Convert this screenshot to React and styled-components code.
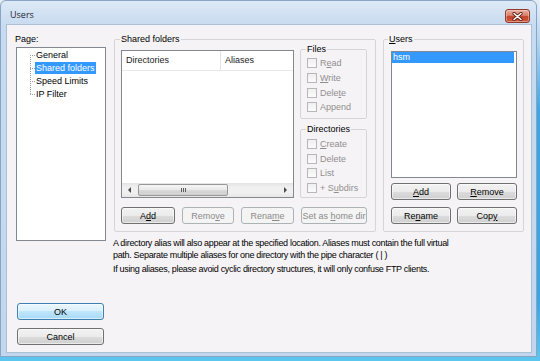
import React from 'react';
import styled, { createGlobalStyle } from 'styled-components';

const Global = createGlobalStyle`
  html, body { margin: 0; padding: 0; }
  body {
    width: 540px; height: 361px; overflow: hidden;
    background: linear-gradient(180deg, #e4edf7 0px, #b7d6f0 40px, #3ea4e3 110px, #3aa5e4 300px, #5cc6ee 361px);
    font-family: "Liberation Sans", Arial, sans-serif;
    font-size: 9px;
    color: #000;
  }
  #root { width: 540px; height: 361px; }
`;

const Window = styled.div`
  width: 537px;
  height: 357px;
  box-sizing: border-box;
  display: flex;
  flex-direction: column;
  background: linear-gradient(180deg, #dde9f6 0px, #c8dbf0 24px, #c2d7ee 100%);
  border: 1px solid #8aa5c4;
  border-radius: 6px 6px 0 0;
  padding: 0 4px 3px 5px;
`;

const TitleBar = styled.div`
  height: 23px;
  display: flex;
  align-items: flex-start;
  justify-content: space-between;
  padding-left: 4px;
`;

const Title = styled.div`
  margin-top: 8px;
  font-family: "Open Sans", "Noto Sans", sans-serif;
  font-size: 9px;
  line-height: 12px;
  color: #1c2533;
`;

const CloseBtn = styled.div`
  margin-top: 8px;
  margin-right: 2px;
  width: 25px;
  height: 14px;
  box-sizing: border-box;
  border: 1px solid #8c3a2c;
  border-radius: 3px;
  background: linear-gradient(180deg, #eab0a2 0%, #d8826d 45%, #c2442b 55%, #cf5a3e 100%);
  box-shadow: inset 0 0 0 1px rgba(255, 220, 210, 0.45);
  display: flex;
  align-items: center;
  justify-content: center;
`;

const Client = styled.div`
  flex: 1;
  display: flex;
  box-sizing: border-box;
  background: #f6f3f6;
  border: 1px solid #aac0d8;
  padding: 9px 7px 7px 9px;
`;

const LeftCol = styled.div`
  width: 90px;
  display: flex;
  flex-direction: column;
`;

const Label = styled.div`
  line-height: 11px;
  margin-left: -1px;
  margin-bottom: 2px;
`;

const Tree = styled.div`
  height: 194px;
  box-sizing: border-box;
  border: 1px solid #828790;
  background: #fff;
  padding-top: 1px;
`;

const TreeList = styled.ul`
  list-style: none;
  margin: 0;
  padding: 0;
  position: relative;
  &::before {
    content: "";
    position: absolute;
    left: 13px;
    top: 6px;
    height: 39px;
    border-left: 1px dotted #9a9a9a;
  }
`;

const TreeItem = styled.li`
  position: relative;
  height: 13px;
  line-height: 13px;
  padding-left: 19px;
  white-space: nowrap;
  &::before {
    content: "";
    position: absolute;
    left: 13px;
    top: 6px;
    width: 5px;
    border-top: 1px dotted #9a9a9a;
  }
`;

const TreeText = styled.span`
  display: inline-block;
  height: 12px;
  line-height: 12px;
  padding: 0 1px;
  margin-left: -1px;
  background: ${(p) => (p.$sel ? '#3399ff' : 'transparent')};
  color: ${(p) => (p.$sel ? '#fff' : '#000')};
`;

const Button = styled.button`
  box-sizing: border-box;
  width: ${(p) => (p.$w ? `${p.$w}px` : 'auto')};
  height: 17px;
  padding: 0;
  font-family: "Liberation Sans", Arial, sans-serif;
  font-size: 9px;
  color: #000;
  border: 1px solid ${(p) => (p.$default ? '#3c7fb1' : '#707070')};
  border-radius: 3px;
  background: ${(p) =>
    p.$default
      ? 'linear-gradient(180deg, #eaf6fd 0%, #d9f0fc 50%, #bee6fd 50%, #a7d9f5 100%)'
      : 'linear-gradient(180deg, #f2f2f2 0%, #ebebeb 50%, #dddddd 50%, #cfcfcf 100%)'};
  box-shadow: inset 0 0 0 1px rgba(255, 255, 255, 0.55);
  &:disabled {
    color: #8a8a8a;
    border-color: #adb2b5;
    background: #f4f4f4;
    box-shadow: none;
  }
  u { text-decoration: underline; text-underline-offset: 1px; }
`;

const OkButton = styled(Button)`
  margin-top: auto;
  margin-left: 1px;
`;

const CancelButton = styled(Button)`
  margin-top: 8px;
  margin-left: 1px;
`;

const MainCol = styled.div`
  flex: 1;
  margin-left: 8px;
  display: flex;
  flex-direction: column;
`;

const TopRow = styled.div`
  display: flex;
  gap: 7px;
`;

const Group = styled.fieldset`
  margin: 0;
  min-width: 0;
  box-sizing: border-box;
  border: 1px solid #d3d5da;
  border-radius: 2px;
  display: flex;
  flex-direction: column;
  width: ${(p) => (p.$w ? `${p.$w}px` : 'auto')};
  flex: ${(p) => (p.$grow ? 1 : 'none')};
  padding: ${(p) => p.$pad};
  margin-top: ${(p) => p.$mt || 0}px;
`;

const Legend = styled.legend`
  padding: 0 1px;
  margin-left: ${(p) => p.$ml || 0}px;
  line-height: 11px;
  font-size: 9px;
  u { text-decoration: underline; }
`;

const SharedRow = styled.div`
  display: flex;
  gap: 6px;
`;

const ListView = styled.div`
  margin-top: 5px;
  width: 173px;
  height: 148px;
  box-sizing: border-box;
  border: 1px solid #828790;
  background: #fff;
  display: flex;
  flex-direction: column;
`;

const Header = styled.div`
  display: flex;
  height: 19px;
  border-bottom: 1px solid #e8e8e8;
`;

const HeaderCell = styled.div`
  width: ${(p) => (p.$w ? `${p.$w}px` : 'auto')};
  flex: ${(p) => (p.$w ? 'none' : 1)};
  padding-left: 4px;
  line-height: 19px;
  color: #222;
  border-right: ${(p) => (p.$w ? '1px solid #e3e3e3' : 'none')};
`;

const ListBody = styled.div`
  flex: 1;
`;

const HScroll = styled.div`
  height: 14px;
  display: flex;
  background: linear-gradient(180deg, #e3e3e3 0%, #f0f0f0 30%, #f0f0f0 70%, #e6e6e6 100%);
`;

const ScrollArrow = styled.div`
  width: 15px;
  display: flex;
  align-items: center;
  justify-content: center;
  &::after {
    content: "";
    width: 0;
    height: 0;
    border-top: 3px solid transparent;
    border-bottom: 3px solid transparent;
    ${(p) => (p.$dir === 'left' ? 'border-right: 3px solid #4a4a4a;' : 'border-left: 3px solid #4a4a4a;')}
  }
`;

const Thumb = styled.div`
  width: 90px;
  margin: 1px 0 1px 1px;
  box-sizing: border-box;
  border: 1px solid #979797;
  border-radius: 2px;
  background: linear-gradient(180deg, #f5f5f5 0%, #e9e9e9 50%, #d9d9d9 51%, #d0d0d0 100%);
  display: flex;
  align-items: center;
  justify-content: center;
`;

const Grip = styled.div`
  width: 5px;
  height: 4px;
  background: repeating-linear-gradient(90deg, #5e5e5e 0 1px, transparent 1px 2px);
`;

const Spacer = styled.div`
  flex: 1;
`;

const SideCol = styled.div`
  width: 67px;
  margin-top: -1px;
  display: flex;
  flex-direction: column;
`;

const CheckRow = styled.div`
  height: 14.7px;
  display: flex;
  align-items: center;
  gap: 3px;
  color: #8f8f8f;
  white-space: nowrap;
  u { text-decoration: underline; }
`;

const Box = styled.span`
  width: 10px;
  height: 10px;
  box-sizing: border-box;
  border: 1px solid #b7b7b7;
  background: linear-gradient(180deg, #efefef, #fbfbfb);
`;

const ButtonRow = styled.div`
  display: flex;
  gap: 7px;
  margin-top: 9px;
`;

const UserList = styled.div`
  margin-top: 6px;
  height: 127px;
  box-sizing: border-box;
  border: 1px solid #828790;
  background: #fff;
  padding-right: 2px;
`;

const UserRow = styled.div`
  height: 11px;
  line-height: 11px;
  padding-left: 1px;
  background: ${(p) => (p.$sel ? '#3399ff' : 'transparent')};
  color: ${(p) => (p.$sel ? '#fff' : '#000')};
`;

const UserButtons = styled.div`
  margin-top: 5px;
  display: grid;
  grid-template-columns: 1fr 1fr;
  column-gap: 6px;
  row-gap: 7px;
`;

const Info = styled.div`
  margin-top: 5px;
  margin-left: -1px;
  letter-spacing: -0.32px;
  white-space: nowrap;
`;

const InfoLine = styled.p`
  margin: ${(p) => (p.$gap ? '2px' : '0')} 0 0 0;
  line-height: 12px;
`;

function Check({ children }) {
  return (
    <CheckRow>
      <Box />
      <span>{children}</span>
    </CheckRow>
  );
}

export default function App() {
  return (
    <>
      <Global />
      <Window>
        <TitleBar>
          <Title>Users</Title>
          <CloseBtn>
            <svg width="11" height="9" viewBox="0 0 11 9">
              <path d="M2 1.5 L9 7.5 M9 1.5 L2 7.5" stroke="#5a1d12" strokeWidth="3.2" strokeLinecap="round" />
              <path d="M2 1.5 L9 7.5 M9 1.5 L2 7.5" stroke="#ffffff" strokeWidth="1.6" strokeLinecap="round" />
            </svg>
          </CloseBtn>
        </TitleBar>
        <Client>
          <LeftCol>
            <Label>Page:</Label>
            <Tree>
              <TreeList>
                <TreeItem><TreeText>General</TreeText></TreeItem>
                <TreeItem><TreeText $sel>Shared folders</TreeText></TreeItem>
                <TreeItem><TreeText>Speed Limits</TreeText></TreeItem>
                <TreeItem><TreeText>IP Filter</TreeText></TreeItem>
              </TreeList>
            </Tree>
            <OkButton $w={87} $default>OK</OkButton>
            <CancelButton $w={87}>Cancel</CancelButton>
          </LeftCol>
          <MainCol>
            <TopRow>
              <Group $w={262} $pad="0 8px 7px 6px">
                <Legend $ml={-1}>Shared folders</Legend>
                <SharedRow>
                  <ListView>
                    <Header>
                      <HeaderCell $w={94}>Directories</HeaderCell>
                      <HeaderCell>Aliases</HeaderCell>
                    </Header>
                    <ListBody />
                    <HScroll>
                      <ScrollArrow $dir="left" />
                      <Thumb><Grip /></Thumb>
                      <Spacer />
                      <ScrollArrow $dir="right" />
                    </HScroll>
                  </ListView>
                  <SideCol>
                    <Group $pad="1px 0 3px 6px">
                      <Legend $ml={-1}>Files</Legend>
                      <Check>R<u>e</u>ad</Check>
                      <Check><u>W</u>rite</Check>
                      <Check>Dele<u>t</u>e</Check>
                      <Check>Append</Check>
                    </Group>
                    <Group $grow $mt={5} $pad="2px 0 0 6px">
                      <Legend $ml={-1}>Directories</Legend>
                      <Check><u>C</u>reate</Check>
                      <Check>Delete</Check>
                      <Check>List</Check>
                      <Check>+ S<u>u</u>bdirs</Check>
                    </Group>
                  </SideCol>
                </SharedRow>
                <ButtonRow>
                  <Button $w={54}>A<u>d</u>d</Button>
                  <Button $w={52} disabled>Remo<u>v</u>e</Button>
                  <Button $w={53} disabled>Rena<u>m</u>e</Button>
                  <Button $w={66} disabled>Set as <u>h</u>ome dir</Button>
                </ButtonRow>
              </Group>
              <Group $grow $pad="0 6px 7px 7px">
                <Legend $ml={-3}><u>U</u>sers</Legend>
                <UserList>
                  <UserRow $sel>hsm</UserRow>
                </UserList>
                <UserButtons>
                  <Button><u>A</u>dd</Button>
                  <Button><u>R</u>emove</Button>
                  <Button>Re<u>n</u>ame</Button>
                  <Button>Cop<u>y</u></Button>
                </UserButtons>
              </Group>
            </TopRow>
            <Info>
              <InfoLine>
                A directory alias will also appear at the specified location. Aliases must contain the full virtual
                <br />
                path. Separate multiple aliases for one directory with the pipe character ( | )
              </InfoLine>
              <InfoLine $gap>If using aliases, please avoid cyclic directory structures, it will only confuse FTP clients.</InfoLine>
            </Info>
          </MainCol>
        </Client>
      </Window>
    </>
  );
}
